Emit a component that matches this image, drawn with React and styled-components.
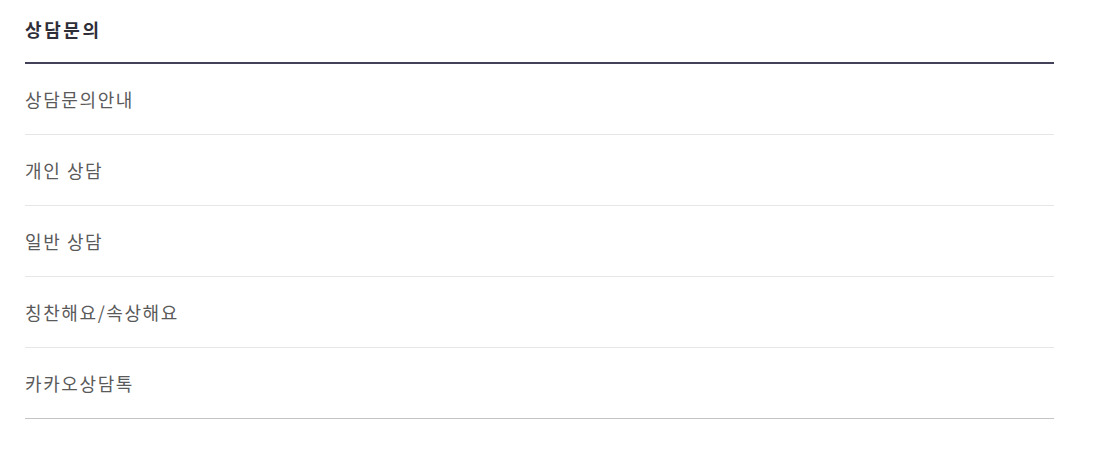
import React from 'react';
import styled, { createGlobalStyle } from 'styled-components';

const GlobalStyle = createGlobalStyle`
  body {
    margin: 0;
    background: #fff;
    font-family: "Noto Sans CJK KR", "Noto Sans", sans-serif;
  }
`

const items = ['상담문의안내', '개인 상담', '일반 상담', '칭찬해요/속상해요', '카카오상담톡']

export default function App() {
  return (
    <>
      <GlobalStyle />
      <Wrap>
        <Title>상담문의</Title>
        <Menu>
          {items.map((label, i) => (
            <Item key={label} last={i === items.length - 1}>
              <ItemLink href="#">{label}</ItemLink>
            </Item>
          ))}
        </Menu>
      </Wrap>
    </>
  )
}

const Wrap = styled.nav`
  width: 1029px;
  margin-left: 25px;
`

const Title = styled.h2`
  margin: 0;
  height: 64px;
  box-sizing: border-box;
  padding-top: 15px;
  font-size: 18px;
  line-height: 28px;
  font-weight: 700;
  letter-spacing: 2.6px;
  color: #2f2f3a;
  border-bottom: 2px solid #43405a;
`

const Menu = styled.ul`
  list-style: none;
  margin: 0;
  padding: 0;
`

const Item = styled.li`
  height: 70px;
  display: flex;
  align-items: center;
  border-bottom: 1px solid ${p => (p.last ? '#c4c4c4' : '#e6e6e6')};
`

const ItemLink = styled.a`
  font-size: 18px;
  letter-spacing: 1.6px;
  color: #5a5a5a;
  text-decoration: none;
  margin-top: -1px;
`
